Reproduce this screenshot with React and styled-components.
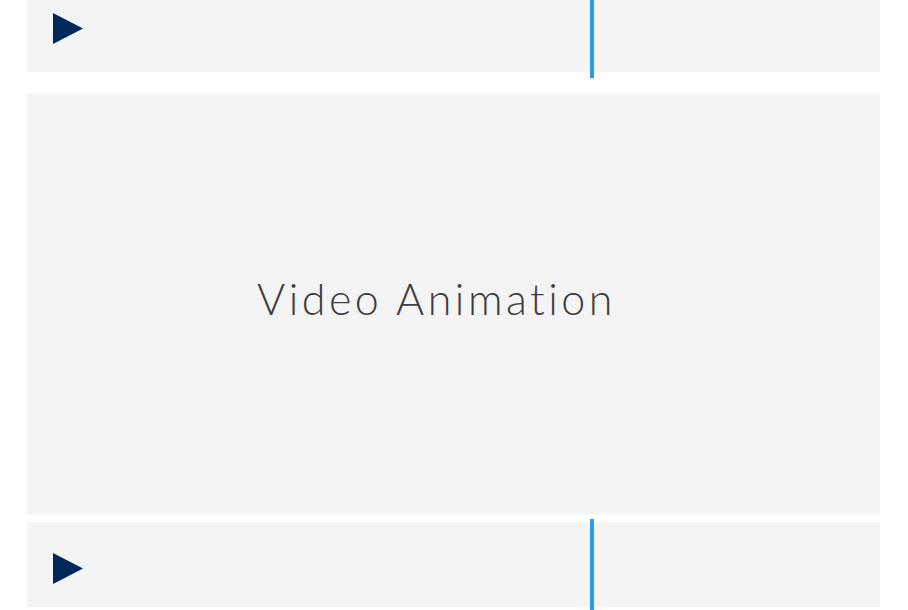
import styled, { createGlobalStyle } from "styled-components";

const GlobalStyle = createGlobalStyle`
  html, body {
    margin: 0;
    padding: 0;
    background: #ffffff;
    overflow: hidden;
  }
  body {
    font-family: Lato, "Open Sans", sans-serif;
  }
`;

const Page = styled.div`
  width: 908px;
  height: 610px;
  padding: 0 28px 0 27px;
  box-sizing: border-box;
  display: flex;
  flex-direction: column;
`;

const Player = styled.div`
  position: relative;
  flex: 0 0 ${(p) => p.$height || 85}px;
  background: #f4f4f4;
  display: flex;
  align-items: flex-start;
  padding: 31px 0 0 26px;
  box-sizing: border-box;
  margin-top: ${(p) => p.$offset || 0}px;
`;

const PlayButton = styled.button`
  border: 0;
  padding: 0;
  background: none;
  width: 30px;
  height: 31px;
  display: flex;
  cursor: pointer;
`;

const Playhead = styled.div`
  position: absolute;
  left: 563px;
  top: -3px;
  bottom: -6px;
  width: 4px;
  background: #2a9af0;
`;

const VideoBox = styled.div`
  flex: 0 0 420px;
  margin: 22px 0 8px;
  background: #f4f4f4;
  display: flex;
  align-items: center;
  padding-left: 230px;
`;

const Caption = styled.span`
  font-family: Lato, sans-serif;
  font-weight: 300;
  font-size: 43px;
  letter-spacing: 3.5px;
  color: #3e3e3e;
  margin-top: -12px;
`;

function AudioRow({ offset, height }) {
  return (
    <Player $offset={offset} $height={height}>
      <PlayButton aria-label="Play">
        <svg width="30" height="31" viewBox="0 0 30 31">
          <polygon points="0,0 30,15.5 0,31" fill="#00285a" />
        </svg>
      </PlayButton>
      <Playhead />
    </Player>
  );
}

export default function App() {
  return (
    <>
      <GlobalStyle />
      <Page>
        <AudioRow offset={-18} height={90} />
        <VideoBox>
          <Caption>Video Animation</Caption>
        </VideoBox>
        <AudioRow />
      </Page>
    </>
  );
}
